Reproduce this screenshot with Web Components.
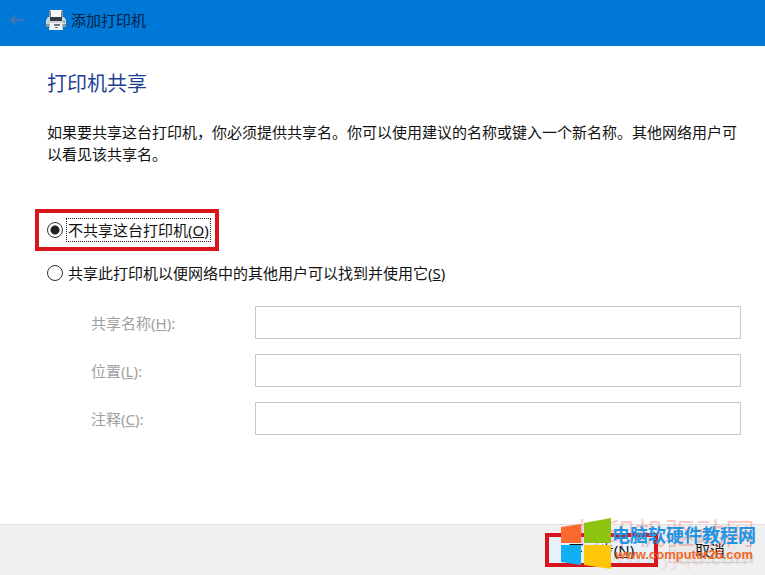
<!DOCTYPE html>
<html lang="zh-CN">
<head>
<meta charset="utf-8">
<title>添加打印机</title>
<style>
  html, body { margin: 0; }
  body {
    font: 15px/22px "Noto Sans", "Noto Sans CJK SC", sans-serif;
    color: #111;
    background: #fff;
  }
</style>
</head>
<body>
<printer-wizard>
  <wizard-titlebar slot="title">添加打印机</wizard-titlebar>
  <wizard-page heading="打印机共享">
    <p slot="intro">如果要共享这台打印机，你必须提供共享名。你可以使用建议的名称或键入一个新名称。其他网络用户可以看见该共享名。</p>
    <share-options></share-options>
    <share-fields></share-fields>
  </wizard-page>
  <wizard-footer slot="footer"></wizard-footer>
</printer-wizard>
<script>
  function define(name, html) {
    const template = document.createElement('template');
    template.innerHTML = html;
    customElements.define(name, class extends HTMLElement {
      constructor() {
        super();
        this.attachShadow({ mode: 'open' }).append(template.content.cloneNode(true));
      }
      connectedCallback() {
        const heading = this.shadowRoot.querySelector('[data-heading]');
        if (heading) heading.textContent = this.getAttribute('heading');
      }
    });
  }

  define('printer-wizard', `
    <style>
      :host { display: flex; flex-direction: column; min-height: 100vh; }
      main { flex: 1; }
    </style>
    <slot name="title"></slot>
    <main><slot></slot></main>
    <slot name="footer"></slot>`);

  define('wizard-titlebar', `
    <style>
      :host { display: flex; align-items: center; height: 46px; padding: 0 8px; box-sizing: border-box;
              background: #0078d7; color: #06223f; }
      button { all: unset; display: flex; width: 18px; height: 40px; align-items: center; margin-right: 20px; }
      .printer { margin-right: 5px; }
      span { padding-bottom: 6px; }
      svg { margin-bottom: 6px; flex: none; }
    </style>
    <button type="button" aria-label="返回">
      <svg width="18" height="14" viewBox="0 0 18 14" fill="none" stroke="#3f78ad" stroke-width="2">
        <path d="M16 7H3M8 2L3 7l5 5"/></svg>
    </button>
    <svg class="printer" width="20" height="20" viewBox="0 0 20 20" aria-hidden="true">
      <path d="M4 0h12v8H4z" fill="#f4f6f7"/>
      <path d="M3 1h2v7H3zM15 1h2v7h-2z" fill="#7d8a93"/>
      <path d="M2 7h16l2 3v6H0v-6z" fill="#ccd3d8"/>
      <path d="M4 7h12v4H4z" fill="#343c43"/>
      <path d="M0 14h20v3H0z" fill="#8d989f"/>
      <path d="M4 13h12l1 7H3z" fill="#f1f4f5"/>
      <path d="M8 14h6v2H8zM9 17h3v1H9z" fill="#6d7982"/>
      <path d="M17 11h2v1h-2z" fill="#46a05a"/>
    </svg>
    <span><slot></slot></span>`);

  define('wizard-page', `
    <style>
      :host { display: block; padding: 24px 24px 24px 47px; }
      h1 { margin: 0 0 23px; font-size: 20px; line-height: 28px; font-weight: 400; color: #1f3f94; }
      ::slotted(p) { margin: 0 -4px 44px 0; }
    </style>
    <h1 data-heading></h1>
    <slot name="intro"></slot>
    <slot></slot>`);

  define('highlight-frame', `
    <style>
      :host { display: flex; width: fit-content; border: 4px solid #d8141c; box-sizing: border-box; }
    </style>
    <slot></slot>`);

  define('share-options', `
    <style>
      :host { display: flex; flex-direction: column; gap: 10px; }
      highlight-frame { margin-left: -12px; padding: 5px 4px 5px 8px; }
      .option { display: flex; align-items: center; gap: 3px; height: 24px; }
      input { appearance: none; width: 16px; height: 16px; margin: 0; border: 1px solid #333;
              border-radius: 50%; background: #fff; flex: none; }
      input:checked { background: radial-gradient(circle, #222 4px, #fff 5px); }
      label { padding: 0 1px; border: 1px dotted transparent; }
      .focused { border-color: #222; }
    </style>
    <highlight-frame>
      <div class="option">
        <input type="radio" name="share" id="no" checked>
        <label class="focused" for="no">不共享这台打印机(<u>O</u>)</label>
      </div>
    </highlight-frame>
    <div class="option">
      <input type="radio" name="share" id="yes">
      <label for="yes">共享此打印机以便网络中的其他用户可以找到并使用它(<u>S</u>)</label>
    </div>`);

  define('share-fields', `
    <style>
      :host { display: grid; grid-template-columns: 164px 1fr; row-gap: 15px; align-items: center;
              margin: 21px 0 0 44px; color: #a0a0a0; }
      input { width: 100%; height: 33px; box-sizing: border-box; margin: 0; padding: 0 6px;
              border: 1px solid #c8c8c8; background: #fff; font: inherit; }
    </style>
    <label for="name">共享名称(<u>H</u>):</label><input id="name" type="text" disabled>
    <label for="place">位置(<u>L</u>):</label><input id="place" type="text" disabled>
    <label for="note">注释(<u>C</u>):</label><input id="note" type="text" disabled>`);

  define('site-watermark', `
    <style>
      :host { position: absolute; right: 8px; bottom: 0; width: 196px; height: 60px; pointer-events: none; }
      div, svg { position: absolute; white-space: nowrap; }
      .back { right: 2px; top: 0; font-size: 30px; line-height: 36px; color: rgba(240, 70, 70, .28); }
      .sub { right: 2px; top: 28px; font-size: 22px; line-height: 26px; color: rgba(190, 100, 100, .14); }
      .logo { left: 0; top: 3px; }
      .name { right: 1px; top: 8px; font-size: 18px; line-height: 24px; font-weight: 700; color: #1e94e4; }
      .url { right: 4px; top: 32px; font: 700 13px/16px "Liberation Sans", sans-serif; color: #f2692a; }
    </style>
    <div class="back">打印机驱动网</div>
    <div class="sub">www.dyjqd.com</div>
    <svg class="logo" width="50" height="52" viewBox="0 0 50 52" aria-hidden="true">
      <path d="M0 9l20-3v19H0z" fill="#fb6a2e"/>
      <path d="M23 5l27-5v25H23z" fill="#8cc410"/>
      <path d="M0 27h20v20L0 44z" fill="#0fb1f2"/>
      <path d="M23 27h27v24l-27-4z" fill="#ffc60a"/>
    </svg>
    <div class="name">电脑软硬件教程网</div>
    <div class="url">www.computer26.com</div>`);

  define('wizard-footer', `
    <style>
      :host { position: relative; display: flex; justify-content: flex-end; align-items: flex-start; gap: 11px;
              padding: 8px 14px 8px; border-top: 1px solid #dfdfdf; background: #f0f0f0; }
      button { box-sizing: border-box; margin: 0; padding: 0; font: inherit; color: #111;
               border: 1px solid #d0d0d0; background: #eaeaea; }
      .next { width: 105px; height: 26px; border: 0; background: #e6f1fa; }
      .cancel { width: 82px; height: 26px; margin-top: 4px; }
    </style>
    <highlight-frame><button class="next" type="button">下一步(<u>N</u>)</button></highlight-frame>
    <button class="cancel" type="button">取消</button>
    <site-watermark></site-watermark>`);
</script>
</body>
</html>
